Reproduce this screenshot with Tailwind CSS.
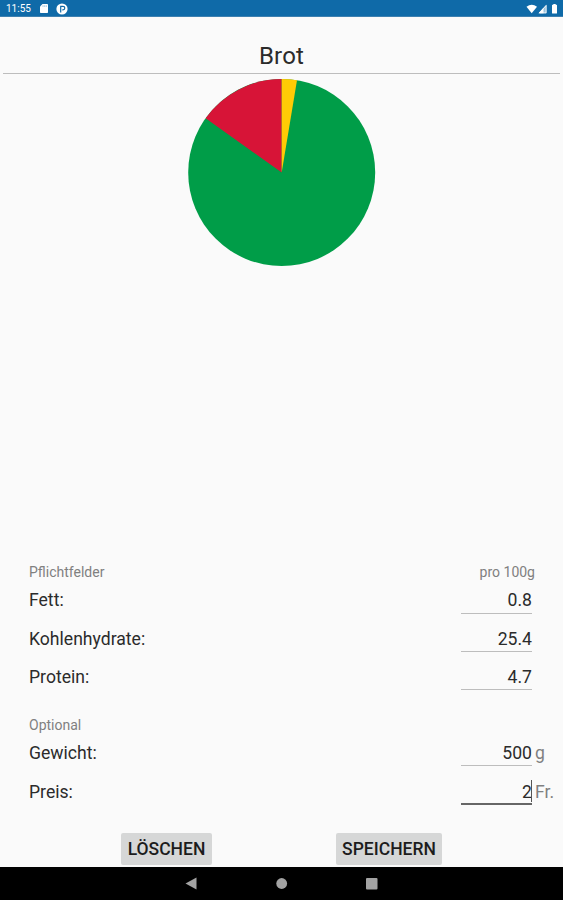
<!DOCTYPE html>
<html lang="de">
<head>
<meta charset="utf-8">
<title>Brot</title>
<script src="https://cdn.jsdelivr.net/npm/@tailwindcss/browser@4"></script>
</head>
<body class="w-[563px] h-[900px] overflow-hidden bg-[#fafafa] font-['Roboto',sans-serif] text-[#2b2b2b] flex flex-col">
<header class="h-[17px] shrink-0 bg-[#0f6aa8] text-white flex items-center justify-between pl-[6px] pr-[4px] border-b border-[#3d80b0]">
  <div class="flex items-center">
    <span class="text-[10px] leading-none w-[34px] pt-[2px]">11:55</span>
    <svg class="w-[8px] h-[9px] mt-[1px]" viewBox="0 0 8 9"><path fill="#fff" d="M2.500 0H7.300Q8 0 8 .7V8.300Q8 9 7.300 9H.7Q0 9 0 8.300V2.500Z"/><path stroke="#8ab7d6" stroke-width=".7" d="M3 1.200V3M4.700 1.200V3M6.300 1.200V3"/></svg>
    <svg class="w-[12px] h-[12px] mt-[1px] ml-[8px]" viewBox="0 0 12 12"><circle cx="6" cy="6" r="5.600" fill="#fff"/><path fill="none" stroke="#0f6aa8" stroke-width="1.200" d="M4.700 9.500V3.300H7A1.800 1.800 0 0 1 7 6.900H6.300"/></svg>
  </div>
  <svg class="w-[34px] h-[12px] mt-[1px]" viewBox="0 0 34 12"><path fill="#fff" d="M1.500 3.800Q6.700-.5 12 3.800L6.700 10.300Z"/><path fill="#9dc3dc" d="M21.500 1.500V10.300H13.500Z"/><path fill="#fff" d="M18.500 4.800V10.300H13.500Z"/><path fill="none" stroke="#fff" stroke-width=".8" d="M21.100 2.500V9.900H14.500Z"/><path fill="#fff" d="M27.500 1.700H28.300V.9H30.700V1.700H31.500Q32 1.700 32 2.200V10Q32 10.500 31.500 10.500H27.500Q27 10.500 27 10V2.200Q27 1.700 27.500 1.700Z"/></svg>
</header>
<main class="flex-1 flex flex-col">
  <h1 class="mx-[3px] h-[57px] shrink-0 border-b-[1.500px] border-[#bdbdbd] text-center text-[24px] leading-[28px] pt-[25px] tracking-[0.2px]">Brot</h1>
  <svg class="w-[188px] h-[188px] mt-[5px] ml-[188px] shrink-0" viewBox="188 79 188 188">
    <circle cx="281.700" cy="172.500" r="93.500" fill="#009d48"/>
    <path fill="#d71437" d="M281.700 172.500L205.600 118.200A93.500 93.500 0 0 1 281.700 79Z"/>
    <path fill="#ffcb05" d="M281.700 172.500V79A93.500 93.500 0 0 1 297 80.300Z"/>
  </svg>
  <section class="mt-[296px] pl-[29px] text-[17.600px] leading-[20px]">
    <div class="h-[18px] pr-[28px] flex justify-between text-[14px] leading-[19px] text-[#808080]"><span>Pflichtfelder</span><span>pro 100g</span></div>
    <div class="h-[38px] pt-[9px] flex"><span class="w-[432px]">Fett:</span><span class="w-[71px] h-[24px] border-b border-[#bdbdbd] text-right">0.8</span></div>
    <div class="h-[38px] pt-[10px] flex"><span class="w-[432px]">Kohlenhydrate:</span><span class="w-[71px] h-[23px] border-b border-[#bdbdbd] text-right">25.4</span></div>
    <div class="h-[38px] pt-[10px] flex"><span class="w-[432px]">Protein:</span><span class="w-[71px] h-[23px] border-b border-[#bdbdbd] text-right">4.7</span></div>
    <div class="h-[21px] mt-[20px] text-[14px] leading-[20px] text-[#808080]">Optional</div>
    <div class="h-[38px] pt-[7px] flex"><span class="w-[432px]">Gewicht:</span><span class="w-[71px] h-[23px] border-b border-[#bdbdbd] text-right">500</span><span class="pl-[3px] text-[#808080]">g</span></div>
    <div class="h-[38px] pt-[8px] flex"><span class="w-[432px]">Preis:</span><span class="relative w-[71px] h-[23px] border-b-2 border-[#666] text-right">2<i class="absolute right-0 -top-[2px] w-px h-[22px] bg-[#555]"></i></span><span class="pl-[3px] text-[#808080]">Fr.</span></div>
  </section>
  <div class="mt-auto mb-[2px] pl-[121px] flex gap-[124px] text-[17.500px] font-medium text-[#1c1c1c]">
    <button class="w-[91px] h-[32px] rounded-[2px] bg-[#d6d7d7]">LÖSCHEN</button>
    <button class="w-[106px] h-[32px] rounded-[2px] bg-[#d6d7d7]">SPEICHERN</button>
  </div>
</main>
<nav class="h-[33px] shrink-0 bg-black">
  <svg class="w-[563px] h-[33px]" viewBox="0 867 563 33" fill="#a3a3a3"><path d="M185.500 883.500L196.500 877.500V889.500Z"/><circle cx="281.700" cy="883.500" r="5.400"/><rect x="366" y="878" width="11.500" height="11.500" rx="1"/></svg>
</nav>
</body>
</html>
